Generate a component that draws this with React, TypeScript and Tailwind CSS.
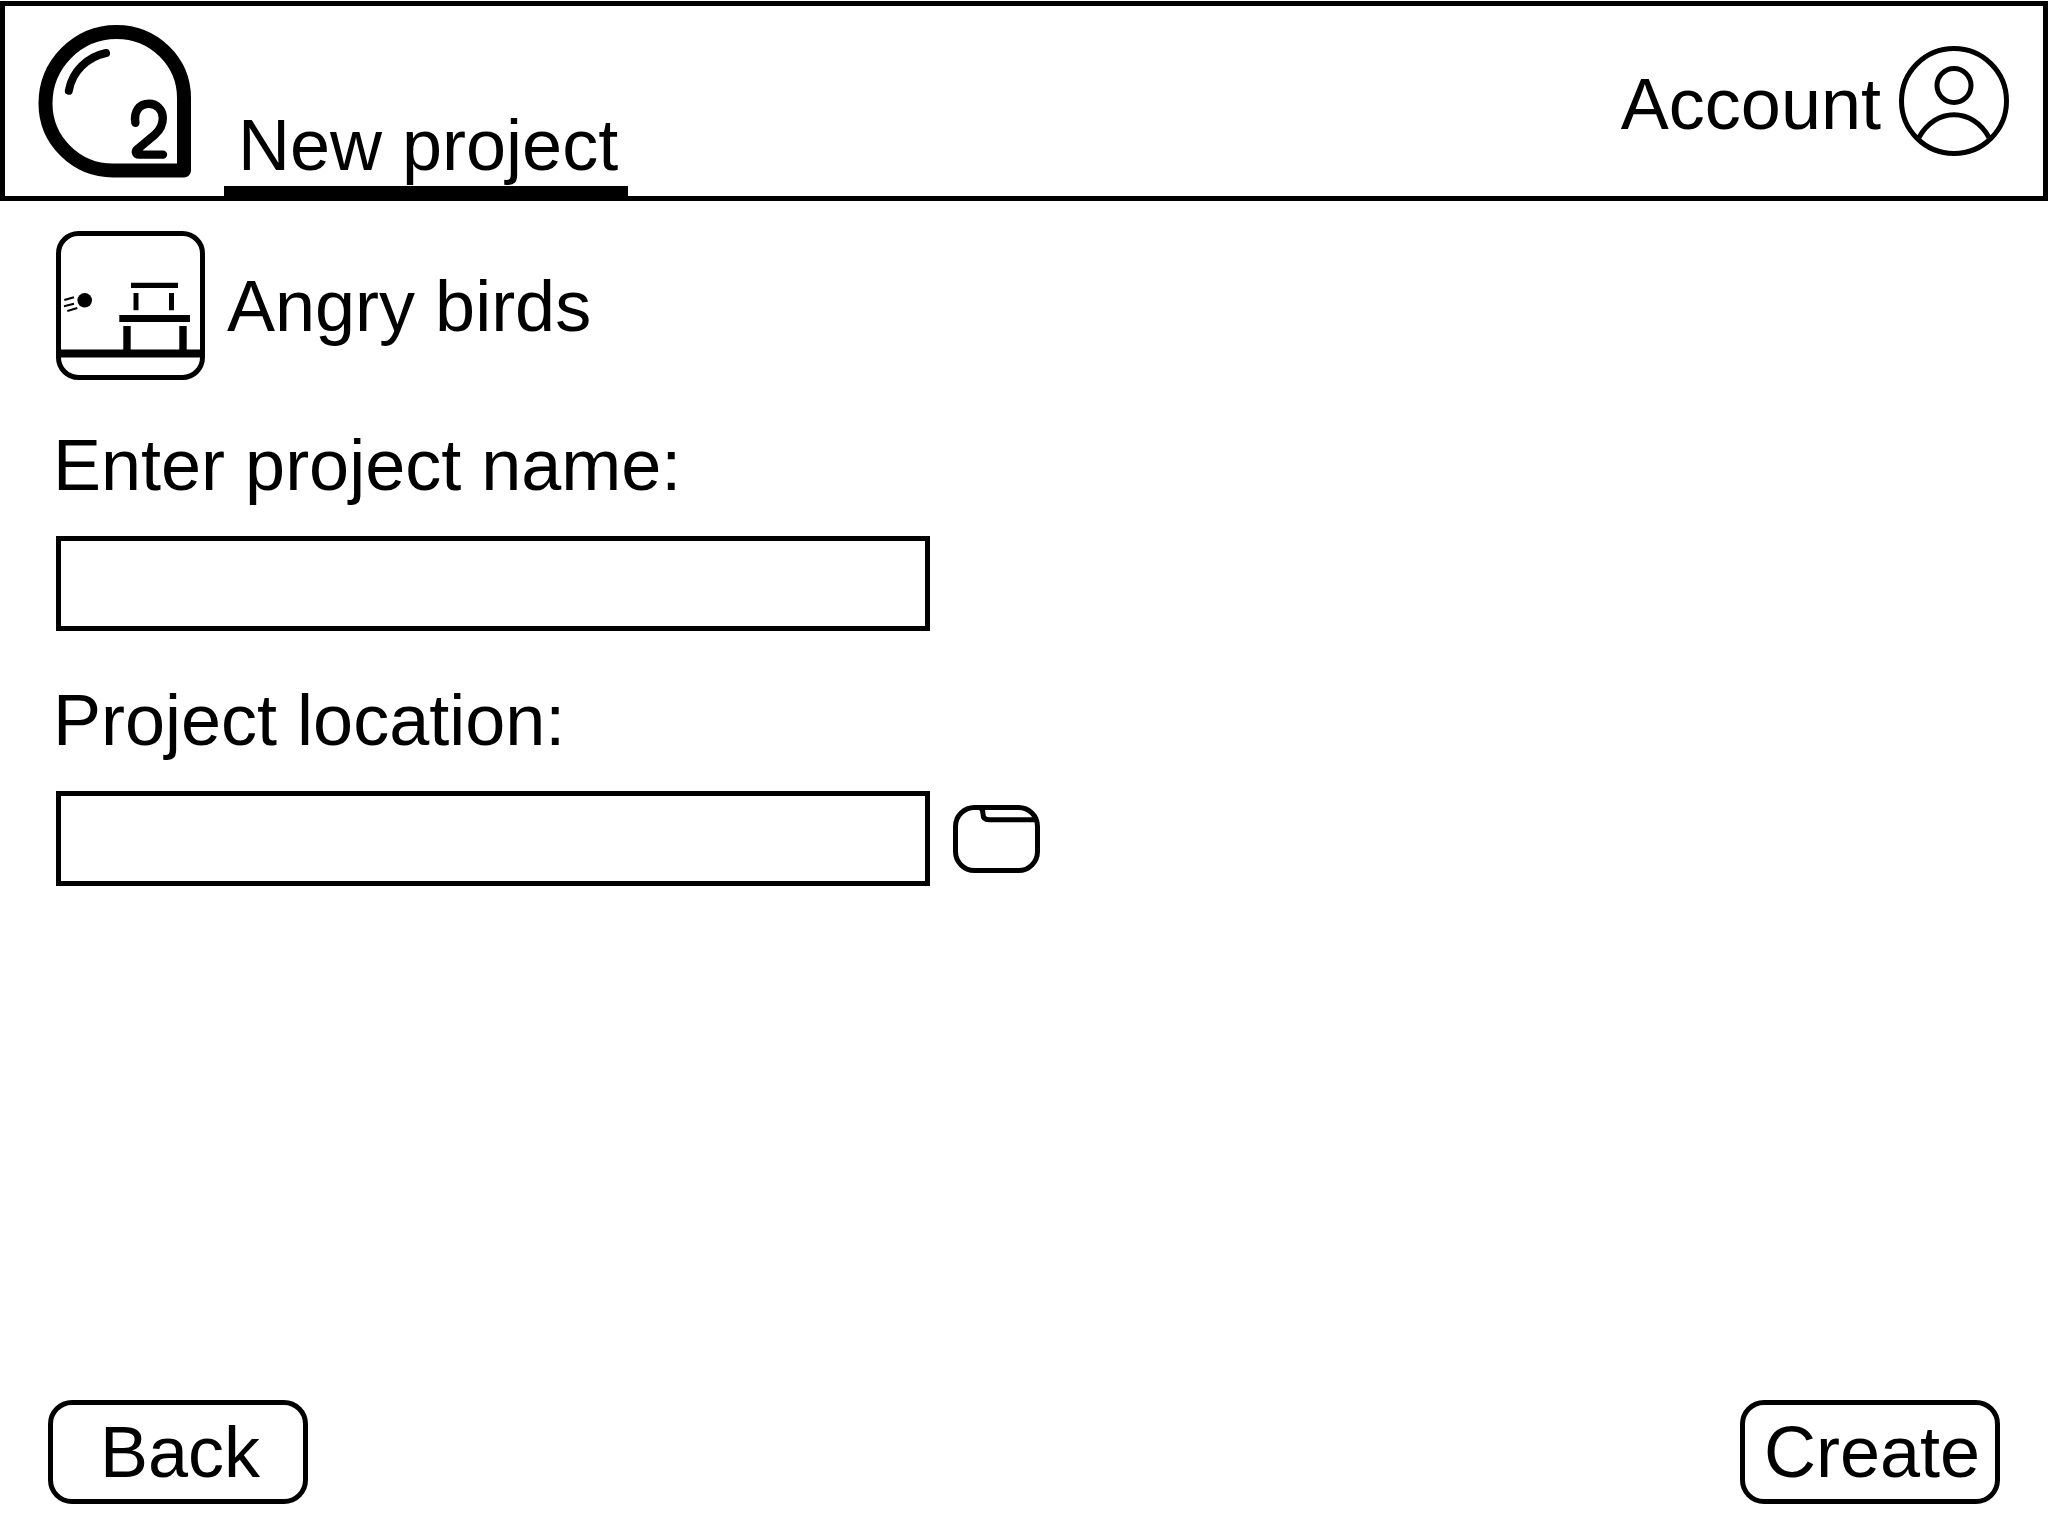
import React from 'react';

function Logo() {
  return (
    <svg viewBox="38 24 154 154" className="h-[154px] w-[154px]" fill="none" stroke="black" strokeLinecap="round" strokeLinejoin="round" role="img" aria-label="O2">
      <path strokeWidth="14" d="M184 170.5H113C76 170.5 45.5 140.5 45.5 103.5C45.5 64.3 77.3 32 116.5 32C153.8 32 184 61.5 184 98Z" />
      <path strokeWidth="8" d="M68.8 90.7C72.2 71.5 87 57 106 53" />
      <path strokeWidth="8.4" d="M135.4 122.8C133.5 112 139 103.8 149 103.8C157 103.8 162.8 110 162.8 118C162.8 124.5 160 130 155 134.5L137.4 149.2C134.8 151.5 135.8 154.6 139 154.6H163" />
    </svg>
  );
}

function UserIcon() {
  return (
    <svg viewBox="0 0 110 110" className="h-[110px] w-[110px]" fill="none" stroke="black" strokeWidth="5" aria-hidden="true">
      <circle cx="55" cy="55" r="52.5" />
      <circle cx="55" cy="39.5" r="17" />
      <path d="M20 91.5C28 77 41 68.8 55 68.8S82 77 90 91.5" />
    </svg>
  );
}

function GameThumbnail() {
  return (
    <svg viewBox="0 0 149 149" className="h-[149px] w-[149px]" aria-hidden="true">
      <rect x="2.5" y="2.5" width="144" height="144" rx="20" fill="none" stroke="black" strokeWidth="5" />
      <path d="M3 118.5h143v8H3zM75 51.7h47v5.3H75zM77.5 62h5v17.3h-5zM113 62h5v17.3h-5zM63.3 84H134v7H63.3zM67.3 95h7.4v24h-7.4zM123.3 95h7.4v24h-7.4z" />
      <circle cx="28.7" cy="69.3" r="7.3" />
      <path d="M8.3 69L18 66.3M8 75.3L18 72.7M11.3 80L21.3 77" stroke="black" strokeWidth="2" />
    </svg>
  );
}

function FolderIcon() {
  return (
    <svg viewBox="0 0 87 68" className="h-[68px] w-[87px]" fill="none" stroke="black" strokeWidth="5" aria-hidden="true">
      <rect x="2.5" y="2.5" width="82" height="63" rx="19" />
      <path d="M27 2.5Q30 4 30 9Q30 14.7 36 14.7H82" />
    </svg>
  );
}

const labelClass = '-ml-[3px] block w-fit';
const inputClass = 'block h-[95px] w-[874px] max-w-full border-[5px] border-black bg-white px-4 outline-none';
const buttonClass = 'h-[104px] w-[260px] rounded-3xl border-[5px] border-black bg-white pl-1 text-center';

export default function App() {
  return (
    <div className="flex min-h-screen flex-col bg-white pt-px font-['Liberation_Sans',Arial,sans-serif] text-[72px] leading-[82px] text-black">
      <header className="mr-px flex h-[200px] items-stretch justify-between border-[5px] border-black pr-[34px] pl-[33px]">
        <div className="flex gap-8">
          <div className="pt-[18px]">
            <Logo />
          </div>
          <nav className="flex items-end">
            <a href="#new-project" aria-current="page" className="border-b-[10px] border-black pr-[10px] pl-[14px]">
              New project
            </a>
          </nav>
        </div>
        <a href="#account" className="flex items-center gap-[18px]">
          <span className="pt-1.5">Account</span>
          <UserIcon />
        </a>
      </header>

      <main className="flex-1 px-14 pt-[30px]">
        <div className="flex items-center gap-[22px]">
          <GameThumbnail />
          <h1>Angry birds</h1>
        </div>
        <form className="mt-11 flex flex-col gap-12">
          <div className="flex flex-col gap-[30px]">
            <label htmlFor="project-name" className={labelClass}>Enter project name:</label>
            <input id="project-name" type="text" className={inputClass} />
          </div>
          <div className="flex flex-col gap-[30px]">
            <label htmlFor="project-location" className={labelClass}>Project location:</label>
            <div className="flex items-center gap-[23px]">
              <input id="project-location" type="text" className={inputClass} />
              <button type="button" aria-label="Browse folders" className="shrink-0">
                <FolderIcon />
              </button>
            </div>
          </div>
        </form>
      </main>

      <footer className="flex justify-between pr-[49px] pb-[33px] pl-12">
        <button type="button" className={buttonClass}>Back</button>
        <button type="button" className={buttonClass}>Create</button>
      </footer>
    </div>
  );
}
